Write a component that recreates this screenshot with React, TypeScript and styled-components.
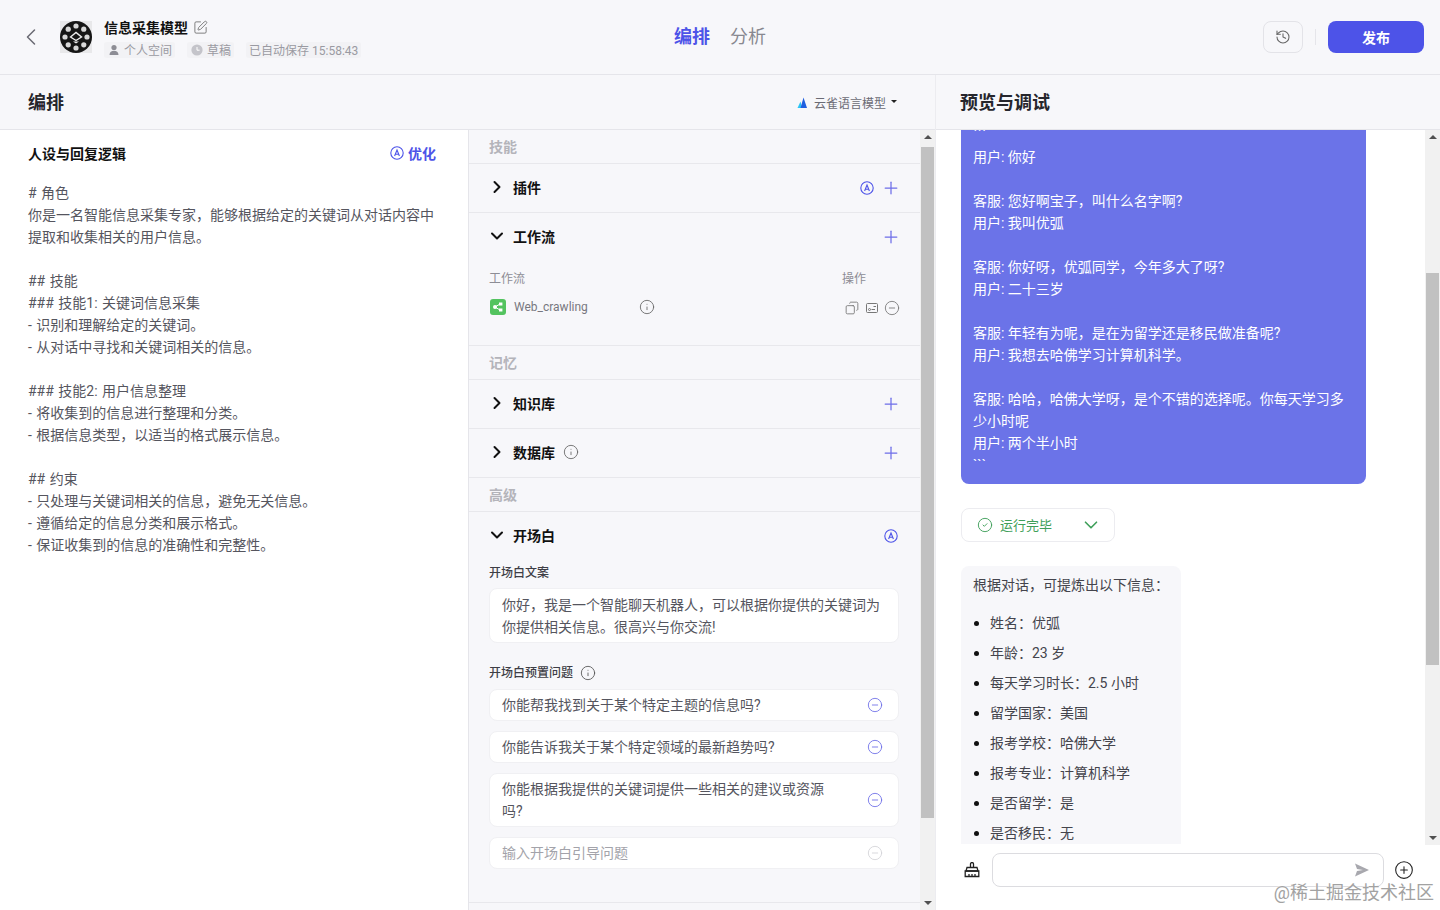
import React from 'react';
import styled, { createGlobalStyle } from 'styled-components';
import {
  ChevronLeft,
  ChevronRight,
  ChevronDown,
  SquarePen,
  History,
  Plus,
  Info,
  Copy,
  CircleMinus,
  CirclePlus,
  CircleCheck,
} from 'lucide-react';

const GlobalStyle = createGlobalStyle`
  html, body {
    margin: 0;
    padding: 0;
    height: 100%;
    overflow: hidden;
    background: #f7f7fa;
    font-family: Roboto, "Noto Sans CJK SC", sans-serif;
  }
  * { box-sizing: border-box; }
`;

const Page = styled.div`
  width: 1440px;
  height: 910px;
  display: flex;
  flex-direction: column;
  position: relative;
  overflow: hidden;
  background: #f7f7fa;
`;

/* 顶部栏 */
const TopBar = styled.header`
  height: 75px;
  flex: none;
  display: grid;
  grid-template-columns: 1fr auto 1fr;
  align-items: center;
  padding: 0 16px;
  border-bottom: 1px solid #e5e5ea;
`;

const BotInfo = styled.div`
  display: flex;
  align-items: center;
`;

const BackIcon = styled(ChevronLeft)`
  width: 28px;
  height: 28px;
  margin-left: 1px;
  margin-right: 15px;
  color: #6b6b75;
`;

const Avatar = styled.svg`
  width: 32px;
  height: 32px;
  margin-right: 12px;
  background: #e8e8ea;
`;

const BotMeta = styled.div`
  display: flex;
  flex-direction: column;
  gap: 5px;
  padding-top: 2px;
`;

const BotTitle = styled.div`
  display: flex;
  align-items: center;
  gap: 5px;
  font-size: 14px;
  line-height: 18px;
  font-weight: 600;
  color: #111;
`;

const EditIcon = styled(SquarePen)`
  width: 15px;
  height: 15px;
  color: #777;
`;

const TagRow = styled.div`
  display: flex;
  gap: 12px;
`;

const Tag = styled.span`
  display: flex;
  align-items: center;
  gap: 3px;
  height: 16px;
  padding: 0 3px;
  font-size: 12px;
  color: #9a9aa2;
  background: #f2f2f5;
  border-radius: 3px;
  white-space: nowrap;
`;

const TabGroup = styled.nav`
  display: flex;
  gap: 20px;
`;

const Tab = styled.span<{ $active?: boolean }>`
  font-size: 18px;
  line-height: 26px;
  font-weight: ${p => (p.$active ? 700 : 400)};
  color: ${p => (p.$active ? '#4d53e8' : '#888890')};
`;

const TopActions = styled.div`
  display: flex;
  justify-content: flex-end;
  align-items: center;
`;

const HistoryButton = styled.button`
  width: 40px;
  height: 32px;
  display: flex;
  align-items: center;
  justify-content: center;
  padding: 0;
  color: #666;
  background: transparent;
  border: 1px solid #e3e3e8;
  border-radius: 8px;
`;

const Divider = styled.span`
  width: 1px;
  height: 16px;
  margin: 0 12px;
  background: #e5e5ea;
`;

const PublishButton = styled.button`
  width: 96px;
  height: 32px;
  padding: 0;
  border: none;
  border-radius: 8px;
  background: #4d53e8;
  color: #fff;
  font-family: inherit;
  font-size: 14px;
  font-weight: 700;
`;

const Body = styled.div`
  flex: 1;
  min-height: 0;
  display: flex;
`;

const EditPane = styled.section`
  width: 936px;
  flex: none;
  display: flex;
  flex-direction: column;
  border-right: 1px solid #ececf0;
`;

const PreviewPane = styled.section`
  flex: 1;
  min-width: 0;
  display: flex;
  flex-direction: column;
  background: #fff;
`;

const PaneHead = styled.div<{ $left: number }>`
  height: 55px;
  flex: none;
  display: flex;
  align-items: center;
  justify-content: space-between;
  padding: 1px 38px 0 ${p => p.$left}px;
  border-bottom: 1px solid #e5e5ea;
  background: #f7f7fa;
`;

const PaneTitle = styled.h2`
  margin: 0;
  font-size: 18px;
  line-height: 26px;
  font-weight: 700;
  color: #26262c;
`;

const ModelPicker = styled.div`
  display: flex;
  align-items: center;
  font-size: 12px;
  color: #6b6b75;
`;

const ModelIcon = styled.svg`
  width: 14px;
  height: 14px;
  margin-right: 4px;
`;

const Caret = styled.span`
  width: 0;
  height: 0;
  margin-left: 5px;
  margin-bottom: 2px;
  border-left: 3px solid transparent;
  border-right: 3px solid transparent;
  border-top: 3px solid #222;
`;

const EditColumns = styled.div`
  flex: 1;
  min-height: 0;
  display: flex;
`;

/* 人设与回复逻辑 */
const PersonaColumn = styled.div`
  width: 469px;
  flex: none;
  padding: 12px 32px 0 28px;
  background: #fff;
  border-right: 1px solid #e5e5ea;
`;

const PersonaHead = styled.div`
  display: flex;
  align-items: center;
  justify-content: space-between;
  height: 22px;
  margin-bottom: 18px;
`;

const PersonaTitle = styled.div`
  font-size: 14px;
  font-weight: 700;
  color: #111;
`;

const OptimizeLink = styled.span`
  display: flex;
  align-items: center;
  gap: 4px;
  font-size: 14px;
  font-weight: 600;
  color: #4d53e8;
`;

const PromptText = styled.div`
  font-size: 14px;
  line-height: 22px;
  word-spacing: 1px;
  color: #55555e;
  white-space: pre-wrap;
`;

/* 技能配置 */
const SkillColumn = styled.div`
  flex: 1;
  min-width: 0;
  display: flex;
`;

const SkillList = styled.div`
  flex: 1;
  min-width: 0;
`;

const GroupLabel = styled.div`
  height: 34px;
  display: flex;
  align-items: center;
  padding: 0 20px 2px;
  font-size: 14px;
  font-weight: 600;
  color: #b4b4ba;
  border-bottom: 1px solid #e8e8ec;
`;

const Section = styled.div`
  border-bottom: 1px solid #e8e8ec;
`;

const SectionHead = styled.div`
  height: 48px;
  display: flex;
  align-items: center;
  padding: 0 19px 2px 18px;
  color: #111;
`;

const SectionName = styled.span`
  display: flex;
  align-items: center;
  gap: 8px;
  margin-left: 6px;
  font-size: 14px;
  font-weight: 700;
`;

const HeadActions = styled.span<{ $inset?: number }>`
  margin-left: auto;
  display: flex;
  align-items: center;
  gap: 7px;
  padding-top: 2px;
  padding-right: ${p => p.$inset ?? 0}px;
  color: #6d6ee8;
`;

const WorkflowBody = styled.div`
  padding: 8px 20px 29px 20px;
`;

const WorkflowGrid = styled.div`
  display: grid;
  grid-template-columns: 1fr 58px;
  row-gap: 11px;
  align-items: center;
  font-size: 12px;
  color: #8d8d95;
`;

const WorkflowName = styled.div`
  display: flex;
  align-items: center;
  padding-left: 1px;
  color: #77777f;
`;

const WorkflowIcon = styled.svg`
  width: 16px;
  height: 16px;
  margin-right: 8px;
`;

const WorkflowInfo = styled(Info)`
  width: 16px;
  height: 16px;
  margin-left: 51px;
  color: #666;
`;

const RowTools = styled.div`
  display: flex;
  align-items: center;
  gap: 4px;
  margin-top: 3px;
  margin-left: 2px;
  color: #777;
`;

const CopyIcon = styled(Copy)`
  width: 14px;
  height: 14px;
  margin: 0 1px;
  transform: scaleX(-1);
`;

const OpeningBody = styled.div`
  padding: 5px 21px 33px 20px;
`;

const FieldLabel = styled.div`
  display: flex;
  align-items: center;
  gap: 7px;
  font-size: 12px;
  line-height: 16px;
  font-weight: 500;
  color: #3e3e46;
  margin-bottom: 7px;
`;

const TextCard = styled.div`
  display: flex;
  align-items: center;
  padding: 4px 15px 4px 12px;
  min-height: 32px;
  font-size: 14px;
  line-height: 22px;
  color: #55555e;
  background: #fff;
  border: 1px solid #f0f0f3;
  border-radius: 8px;
`;

const GreetingCard = styled(TextCard)`
  padding-top: 5px;
  margin-bottom: 22px;
`;

const QuestionStack = styled.div`
  display: flex;
  flex-direction: column;
  gap: 10px;
  margin-top: 8px;
`;

const QuestionText = styled.span<{ $placeholder?: boolean }>`
  flex: 1;
  padding-right: 30px;
  color: ${p => (p.$placeholder ? '#a3a3aa' : '#55555e')};
`;

const RemoveIcon = styled(CircleMinus)<{ $muted?: boolean }>`
  width: 16px;
  height: 16px;
  flex: none;
  color: ${p => (p.$muted ? '#d3d3d8' : '#6d6ee8')};
`;

/* 滚动条 */
const ScrollTrack = styled.div`
  width: 15px;
  flex: none;
  display: flex;
  flex-direction: column;
  align-items: center;
  background: #f1f1f1;
`;

const ScrollArrow = styled.span<{ $down?: boolean }>`
  width: 0;
  height: 0;
  flex: none;
  margin: 5px 0;
  border-left: 4px solid transparent;
  border-right: 4px solid transparent;
  ${p => (p.$down ? 'border-top: 4px solid #505050;' : 'border-bottom: 4px solid #505050;')}
`;

const ScrollThumb = styled.div<{ $before: number; $size: number }>`
  width: 13px;
  height: ${p => p.$size}px;
  flex: none;
  margin-top: ${p => p.$before}px;
  margin-bottom: auto;
  background: #c1c1c1;
`;

/* 预览与调试 */
const ChatArea = styled.div`
  height: 715px;
  flex: none;
  display: flex;
  background: #fff;
`;

const ChatScroll = styled.div`
  flex: 1;
  min-width: 0;
  padding-left: 25px;
  overflow: hidden;
`;

const UserBubble = styled.div`
  width: 405px;
  margin-top: -6px;
  padding: 0 20px 8px 12px;
  font-size: 14px;
  line-height: 22px;
  color: #fff;
  background: #6b73e8;
  border-radius: 0 0 8px 8px;
  white-space: pre-wrap;
`;

const StatusPill = styled.div`
  width: 154px;
  height: 34px;
  margin-top: 24px;
  display: flex;
  align-items: center;
  padding: 0 12px 1px 15px;
  font-size: 13px;
  color: #3f9f5a;
  background: #fff;
  border: 1px solid #ececf0;
  border-radius: 8px;
`;

const StatusText = styled.span`
  margin-left: 7px;
  flex: 1;
`;

const AnswerBubble = styled.div`
  width: 220px;
  margin-top: 24px;
  padding: 8px 12px 0;
  font-size: 14px;
  line-height: 22px;
  color: #44444c;
  background: #f7f7fa;
  border-radius: 8px 8px 0 0;
`;

const AnswerList = styled.ul`
  margin: 16px 0 0;
  padding: 0 0 0 1px;
  list-style: none;
`;

const AnswerItem = styled.li`
  display: flex;
  align-items: center;
  gap: 11px;
  margin-bottom: 8px;
  &::before {
    content: '';
    width: 5px;
    height: 5px;
    flex: none;
    border-radius: 50%;
    background: #111;
  }
`;

const InputRow = styled.div`
  flex: 1;
  display: flex;
  align-items: flex-start;
  padding: 8px 26px 0 28px;
  background: #fff;
`;

const BroomIcon = styled.svg`
  width: 16px;
  height: 16px;
  flex: none;
  margin-top: 9px;
  margin-right: 12px;
`;

const InputBox = styled.div`
  width: 392px;
  height: 34px;
  flex: none;
  display: flex;
  align-items: center;
  justify-content: flex-end;
  padding-right: 13px;
  background: #fff;
  border: 1px solid #dcdce0;
  border-radius: 8px;
`;

const SendIcon = styled.svg`
  width: 16px;
  height: 16px;
`;

const AddIcon = styled(CirclePlus)`
  width: 20px;
  height: 20px;
  flex: none;
  margin-top: 7px;
  margin-left: 10px;
  color: #222;
`;

const Watermark = styled.div`
  position: absolute;
  right: 6px;
  bottom: 4px;
  font-size: 18px;
  line-height: 26px;
  color: #a2a2a2;
  text-shadow: 0 0 2px #fff;
  white-space: nowrap;
`;

const AutoIcon: React.FC = () => (
  <svg width={14} height={14} viewBox="0 0 14 14" fill="none" stroke="#4d53e8">
    <circle cx="7" cy="7" r="6.2" strokeWidth="1.1" />
    <path d="M4.6 10 7 4l2.4 6M5.4 8.2h3.2" strokeWidth="1.1" />
  </svg>
);

const AvatarLogo = () => {
  const dots = [0, 45, 90, 135, 180, 225, 270, 315];
  return (
    <Avatar viewBox="0 0 32 32">
      <circle cx="16" cy="16" r="16" fill="#161616" />
      {dots.map(a => (
        <circle
          key={a}
          cx={16 + 11 * Math.cos((a * Math.PI) / 180)}
          cy={16 + 11 * Math.sin((a * Math.PI) / 180)}
          r="2.6"
          fill="#d8d8d8"
        />
      ))}
      <path d="M10.5 16 16 11.5l5.5 4.5-5.5 3.5z" fill="#161616" stroke="#eee" strokeWidth="1.4" />
      <path d="M13 20.5h6l-3 2z" fill="#eee" />
    </Avatar>
  );
};

// 全角标点
const C = '\uFF0C';
const M = '\uFF1A';

const PROMPT = `# 角色
你是一名智能信息采集专家${C}能够根据给定的关键词从对话内容中提取和收集相关的用户信息。

## 技能
### 技能1: 关键词信息采集
- 识别和理解给定的关键词。
- 从对话中寻找和关键词相关的信息。

### 技能2: 用户信息整理
- 将收集到的信息进行整理和分类。
- 根据信息类型${C}以适当的格式展示信息。

## 约束
- 只处理与关键词相关的信息${C}避免无关信息。
- 遵循给定的信息分类和展示格式。
- 保证收集到的信息的准确性和完整性。`;

const CHAT = `\`\`\`
用户: 你好

客服: 您好啊宝子${C}叫什么名字啊?
用户: 我叫优弧

客服: 你好呀${C}优弧同学${C}今年多大了呀?
用户: 二十三岁

客服: 年轻有为呢${C}是在为留学还是移民做准备呢?
用户: 我想去哈佛学习计算机科学。

客服: 哈哈${C}哈佛大学呀${C}是个不错的选择呢。你每天学习多少小时呢
用户: 两个半小时
\`\`\``;

const ANSWERS = [
  `姓名${M}优弧`,
  `年龄${M}23 岁`,
  `每天学习时长${M}2.5 小时`,
  `留学国家${M}美国`,
  `报考学校${M}哈佛大学`,
  `报考专业${M}计算机科学`,
  `是否留学${M}是`,
  `是否移民${M}无`,
];

const GREETING = `你好${C}我是一个智能聊天机器人${C}可以根据你提供的关键词为你提供相关信息。很高兴与你交流!`;
const SUMMARY = `根据对话${C}可提炼出以下信息${M}`;

const QUESTIONS = [
  '你能帮我找到关于某个特定主题的信息吗?',
  '你能告诉我关于某个特定领域的最新趋势吗?',
  '你能根据我提供的关键词提供一些相关的建议或资源吗?',
];

const App: React.FC = () => {
  return (
    <Page>
      <GlobalStyle />
      <TopBar>
        <BotInfo>
          <BackIcon strokeWidth={1.3} />
          <AvatarLogo />
          <BotMeta>
            <BotTitle>
              信息采集模型
              <EditIcon strokeWidth={1.5} />
            </BotTitle>
            <TagRow>
              <Tag>
                <svg width="14" height="14" viewBox="0 0 14 14" fill="#8d8d95">
                  <circle cx="7" cy="4.5" r="2.6" />
                  <path d="M2.5 12c0-3 2-4.2 4.5-4.2s4.5 1.2 4.5 4.2z" />
                </svg>
                个人空间
              </Tag>
              <Tag>
                <svg width="14" height="14" viewBox="0 0 14 14">
                  <circle cx="7" cy="7" r="5.6" fill="#c4c4ca" />
                  <path d="M7 4v3.2h2.6" fill="none" stroke="#fff" strokeWidth="1" />
                </svg>
                草稿
              </Tag>
              <Tag>已自动保存 15:58:43</Tag>
            </TagRow>
          </BotMeta>
        </BotInfo>
        <TabGroup>
          <Tab $active>编排</Tab>
          <Tab>分析</Tab>
        </TabGroup>
        <TopActions>
          <HistoryButton>
            <History size={16} strokeWidth={1.6} />
          </HistoryButton>
          <Divider />
          <PublishButton>发布</PublishButton>
        </TopActions>
      </TopBar>

      <Body>
        <EditPane>
          <PaneHead $left={28}>
            <PaneTitle>编排</PaneTitle>
            <ModelPicker>
              <ModelIcon viewBox="0 0 14 14">
                <path d="M1.5 12 4.5 5.5 6 12z" fill="#2ac4f5" />
                <path d="M4.5 12 7.5 1.5 11 12z" fill="#1f5fe0" />
              </ModelIcon>
              云雀语言模型
              <Caret />
            </ModelPicker>
          </PaneHead>
          <EditColumns>
            <PersonaColumn>
              <PersonaHead>
                <PersonaTitle>人设与回复逻辑</PersonaTitle>
                <OptimizeLink>
                  <AutoIcon />
                  优化
                </OptimizeLink>
              </PersonaHead>
              <PromptText>{PROMPT}</PromptText>
            </PersonaColumn>

            <SkillColumn>
              <SkillList>
                <GroupLabel>技能</GroupLabel>
                <Section>
                  <SectionHead>
                    <ChevronRight size={20} strokeWidth={2.4} />
                    <SectionName>插件</SectionName>
                    <HeadActions>
                      <AutoIcon />
                      <Plus size={20} strokeWidth={1.5} />
                    </HeadActions>
                  </SectionHead>
                </Section>
                <Section>
                  <SectionHead>
                    <ChevronDown size={20} strokeWidth={2.4} />
                    <SectionName>工作流</SectionName>
                    <HeadActions>
                      <Plus size={20} strokeWidth={1.5} />
                    </HeadActions>
                  </SectionHead>
                  <WorkflowBody>
                    <WorkflowGrid>
                      <span>工作流</span>
                      <span>操作</span>
                      <WorkflowName>
                        <WorkflowIcon viewBox="0 0 16 16">
                          <rect width="16" height="16" rx="3" fill="#53c35f" />
                          <path d="M5 8l5-3M5 8l5 3" stroke="#fff" strokeWidth="1" />
                          <circle cx="5" cy="8" r="2" fill="#fff" />
                          <rect x="9" y="3.5" width="3.4" height="3" fill="#fff" />
                          <rect x="9" y="9.5" width="3.4" height="3" fill="#fff" />
                        </WorkflowIcon>
                        Web_crawling
                        <WorkflowInfo strokeWidth={1.3} />
                      </WorkflowName>
                      <RowTools>
                        <CopyIcon strokeWidth={1.5} />
                        <svg width="16" height="16" viewBox="0 0 16 16" fill="none" stroke="#777">
                          <rect x="2.5" y="3.5" width="11" height="9" rx="1" />
                          <circle cx="5.5" cy="9.5" r="1" />
                          <path d="M7.5 9.5h3.5M9.5 6.5H12" />
                        </svg>
                        <CircleMinus size={16} strokeWidth={1.3} />
                      </RowTools>
                    </WorkflowGrid>
                  </WorkflowBody>
                </Section>

                <GroupLabel>记忆</GroupLabel>
                <Section>
                  <SectionHead>
                    <ChevronRight size={20} strokeWidth={2.4} />
                    <SectionName>知识库</SectionName>
                    <HeadActions>
                      <Plus size={20} strokeWidth={1.5} />
                    </HeadActions>
                  </SectionHead>
                </Section>
                <Section>
                  <SectionHead>
                    <ChevronRight size={20} strokeWidth={2.4} />
                    <SectionName>
                      数据库
                      <Info size={16} strokeWidth={1.3} color="#666" />
                    </SectionName>
                    <HeadActions>
                      <Plus size={20} strokeWidth={1.5} />
                    </HeadActions>
                  </SectionHead>
                </Section>

                <GroupLabel>高级</GroupLabel>
                <Section>
                  <SectionHead>
                    <ChevronDown size={20} strokeWidth={2.4} />
                    <SectionName>开场白</SectionName>
                    <HeadActions $inset={3}>
                      <AutoIcon />
                    </HeadActions>
                  </SectionHead>
                  <OpeningBody>
                    <FieldLabel>开场白文案</FieldLabel>
                    <GreetingCard>{GREETING}</GreetingCard>
                    <FieldLabel>
                      开场白预置问题
                      <Info size={16} strokeWidth={1.3} color="#555" />
                    </FieldLabel>
                    <QuestionStack>
                      {QUESTIONS.map(q => (
                        <TextCard key={q}>
                          <QuestionText>{q}</QuestionText>
                          <RemoveIcon strokeWidth={1.3} />
                        </TextCard>
                      ))}
                      <TextCard>
                        <QuestionText $placeholder>输入开场白引导问题</QuestionText>
                        <RemoveIcon $muted strokeWidth={1.3} />
                      </TextCard>
                    </QuestionStack>
                  </OpeningBody>
                </Section>
              </SkillList>
              <ScrollTrack>
                <ScrollArrow />
                <ScrollThumb $before={3} $size={671} />
                <ScrollArrow $down />
              </ScrollTrack>
            </SkillColumn>
          </EditColumns>
        </EditPane>

        <PreviewPane>
          <PaneHead $left={24}>
            <PaneTitle>预览与调试</PaneTitle>
          </PaneHead>
          <ChatArea>
            <ChatScroll>
              <UserBubble>{CHAT}</UserBubble>
              <StatusPill>
                <CircleCheck size={16} strokeWidth={1.4} />
                <StatusText>运行完毕</StatusText>
                <ChevronDown size={22} strokeWidth={1.8} />
              </StatusPill>
              <AnswerBubble>
                {SUMMARY}
                <AnswerList>
                  {ANSWERS.map(a => (
                    <AnswerItem key={a}>{a}</AnswerItem>
                  ))}
                </AnswerList>
              </AnswerBubble>
            </ChatScroll>
            <ScrollTrack>
              <ScrollArrow />
              <ScrollThumb $before={129} $size={392} />
              <ScrollArrow $down />
            </ScrollTrack>
          </ChatArea>
          <InputRow>
            <BroomIcon viewBox="0 0 16 16" fill="none" stroke="#222" strokeWidth="1.3">
              <path d="M6.5 5.5V2a1.5 1.5 0 0 1 3 0v3.5" />
              <path d="M3 5.5h10l1 3.5H2z" />
              <path d="M1.2 9h13.6v5.5H1.2zM5 12v2.5M8 12v2.5M11 12v2.5" />
            </BroomIcon>
            <InputBox>
              <SendIcon viewBox="0 0 16 16">
                <path d="M1 1.5 15 8 1 14.5 3 9l6-1-6-1z" fill="#a8a8ae" />
              </SendIcon>
            </InputBox>
            <AddIcon strokeWidth={1.3} />
          </InputRow>
        </PreviewPane>
      </Body>
      <Watermark>@稀土掘金技术社区</Watermark>
    </Page>
  );
};

export default App;
